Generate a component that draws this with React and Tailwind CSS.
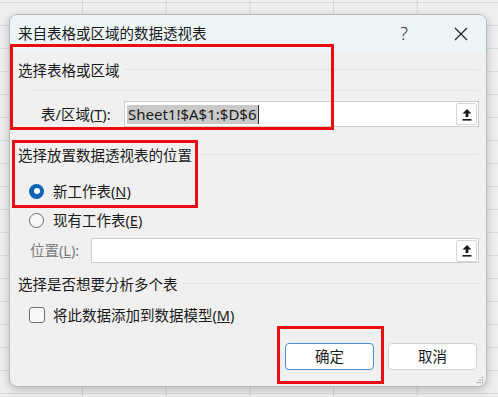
import React from "react";

function UploadIcon() {
  return (
    <svg width="10" height="13" viewBox="0 0 10 13">
      <path d="M5 1 L9.5 5.5 L6.4 5.5 L6.4 9 L3.6 9 L3.6 5.5 L0.5 5.5 Z" fill="#1a1a1a" />
      <rect x="0.5" y="11" width="9" height="1.6" fill="#1a1a1a" />
    </svg>
  );
}

function SectionHeader({ children }) {
  return (
    <div className="flex items-center h-5 gap-1">
      <span className="whitespace-nowrap">{children}</span>
      <div className="flex-1 h-px bg-[#e2e2e2] mt-[-3px]" />
    </div>
  );
}

export default function App() {
  return (
    <div
      className="relative w-[498px] h-[397px] overflow-hidden bg-[#efefef] pl-[9px] pt-[14px] bg-[linear-gradient(to_right,#d5d5d5_1px,transparent_1px),linear-gradient(to_bottom,#d9d9d9_1px,transparent_1px)] bg-[size:83.7px_23px] bg-[position:-1.7px_2px]"
      style={{ fontFamily: '"Noto Sans", "Noto Sans CJK SC", sans-serif' }}
    >
      {/* DIALOG */}
      <div className="w-[478px] h-[373px] rounded-[8px] border border-[#b9b9b9] bg-[#f0f0f0] overflow-hidden shadow-[0_3px_10px_rgba(0,0,0,0.22)] flex flex-col text-[14.5px] text-[#1b1b1b]">
        {/* TITLE */}
        <div className="h-[36px] bg-[#eef5f8] flex items-center pl-[8px] pr-[18px] shrink-0">
          <span className="flex-1 text-[14.5px] text-[#1a1a1a] leading-none">来自表格或区域的数据透视表</span>
          <span className="text-[18px] text-[#333] mr-[46px] leading-none font-light">?</span>
          <svg width="14" height="14" viewBox="0 0 14 14" className="mt-[1px]">
            <path d="M1 1 L13 13 M13 1 L1 13" stroke="#222" strokeWidth="1.2" />
          </svg>
        </div>

        {/* BODY */}
        <div className="relative flex-1 flex flex-col pl-[8px] pr-[7px]">
          <div className="absolute left-[19px] right-[7px] top-[39px] h-px bg-[#e6e6e6]" />
          <div className="mt-[10px]">
            <SectionHeader>选择表格或区域</SectionHeader>
          </div>

          <div className="mt-[20px] flex items-center h-[26px]">
            <span className="ml-[23px] w-[83px] leading-none">
              表/区域(<span className="underline">T</span>):
            </span>
            <div className="flex-1 h-[26px] bg-white border border-[#cdcdcd] flex items-center pl-[2px] pr-[1px]">
              <span className="bg-[#c9c9c9] text-[#1a1a1a] text-[15px] leading-[19px] px-[1px]">Sheet1!$A$1:$D$6</span>
              <span className="w-px h-[19px] bg-[#333]" />
              <div className="flex-1" />
              <div className="w-[21px] h-[22px] border border-[#d6d6d6] rounded-[2px] flex items-center justify-center bg-white">
                <UploadIcon />
              </div>
            </div>
          </div>

          <div className="mt-[19px]">
            <SectionHeader>选择放置数据透视表的位置</SectionHeader>
          </div>

          <div className="mt-[15px] flex items-center h-5 pl-[11px]">
            <span className="w-[15px] h-[15px] rounded-full bg-[#0a64b8] flex items-center justify-center">
              <span className="w-[6px] h-[6px] rounded-full bg-white" />
            </span>
            <span className="ml-[9px] leading-none">
              新工作表(<span className="underline">N</span>)
            </span>
          </div>

          <div className="mt-[9px] flex items-center h-5 pl-[11px]">
            <span className="w-[15px] h-[15px] rounded-full border border-[#6e6e6e] bg-[#f8f8f8]" />
            <span className="ml-[9px] leading-none">
              现有工作表(<span className="underline">E</span>)
            </span>
          </div>

          <div className="mt-[8px] flex items-center h-[25px]">
            <span className="ml-[12px] w-[61px] leading-none text-[#7c7c7c]">
              位置(<span className="underline">L</span>):
            </span>
            <div className="w-[389px] h-[25px] bg-white border border-[#cdcdcd] flex items-center justify-end pr-[1px]">
              <div className="w-[21px] h-[22px] border border-[#d6d6d6] rounded-[2px] flex items-center justify-center bg-white">
                <UploadIcon />
              </div>
            </div>
          </div>

          <div className="mt-[12px]">
            <SectionHeader>选择是否想要分析多个表</SectionHeader>
          </div>

          <div className="mt-[10px] flex items-center h-5 pl-[11px]">
            <span className="w-[16px] h-[16px] rounded-[3px] border border-[#6e6e6e] bg-[#f8f8f8]" />
            <span className="ml-[8px] leading-none">
              将此数据添加到数据模型(<span className="underline">M</span>)
            </span>
          </div>

          <div className="mt-[18px] flex justify-end gap-[14px] pr-[2px]">
            <button className="w-[89px] h-[27px] bg-white border border-[#4a90d9] rounded-[4px] text-[14.5px] leading-none text-[#1a1a1a]">
              确定
            </button>
            <button className="w-[89px] h-[27px] bg-white border border-[#d2d2d2] rounded-[4px] text-[14.5px] leading-none text-[#1a1a1a]">
              取消
            </button>
          </div>

          {/* resize grip */}
          <svg width="8" height="8" viewBox="0 0 8 8" className="absolute right-[2px] bottom-[2px]">
            <circle cx="6.5" cy="1.5" r="0.8" fill="#9a9a9a" />
            <circle cx="4" cy="4" r="0.8" fill="#9a9a9a" />
            <circle cx="6.5" cy="4" r="0.8" fill="#9a9a9a" />
            <circle cx="1.5" cy="6.5" r="0.8" fill="#9a9a9a" />
            <circle cx="4" cy="6.5" r="0.8" fill="#9a9a9a" />
            <circle cx="6.5" cy="6.5" r="0.8" fill="#9a9a9a" />
          </svg>
        </div>
      </div>

      {/* RED ANNOTATIONS */}
      <div className="absolute left-[10px] top-[44px] w-[324px] h-[86px] border-[3px] border-[#ec0c13]" />
      <div className="absolute left-[12px] top-[140px] w-[186px] h-[68px] border-[3px] border-[#ec0c13]" />
      <div className="absolute left-[277px] top-[326px] w-[107px] h-[58px] border-[3px] border-[#ec0c13]" />
    </div>
  );
}
